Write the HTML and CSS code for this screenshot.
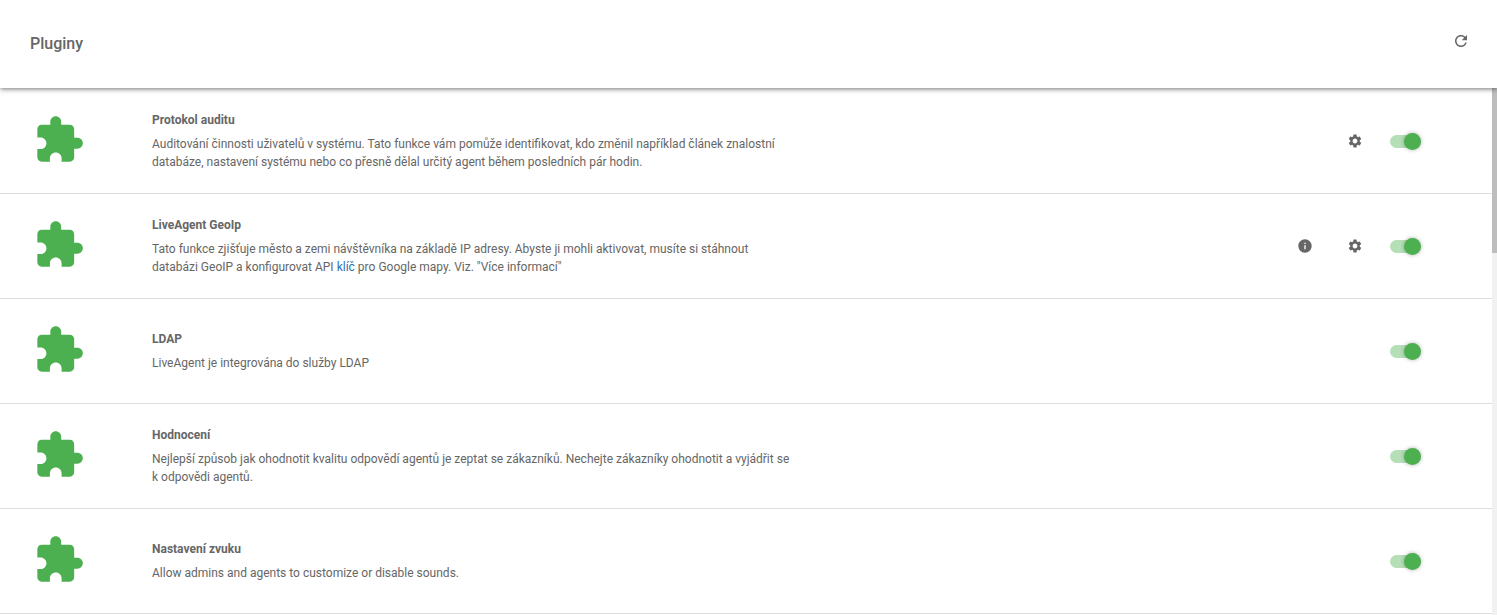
FILE: index.html
```html
<!DOCTYPE html>
<html lang="cs">
<head>
    <meta charset="UTF-8">
    <meta name="viewport" content="width=device-width, initial-scale=1.0">
    <title>Pluginy</title>
    <link rel="stylesheet" href="styles.css">
</head>
<body>
    <svg class="icon-defs" aria-hidden="true">
        <symbol id="i-plugin" viewBox="0 0 24 24"><path d="M20.5 11H19V7c0-1.1-.9-2-2-2h-4V3.5C13 2.12 11.88 1 10.5 1S8 2.12 8 3.5V5H4c-1.1 0-1.99.9-1.99 2v3.8H3.5c1.49 0 2.7 1.21 2.7 2.7s-1.21 2.7-2.7 2.7H2V20c0 1.1.9 2 2 2h3.8v-1.5c0-1.49 1.21-2.7 2.7-2.7 1.49 0 2.7 1.21 2.7 2.7V22H17c1.1 0 2-.9 2-2v-4h1.5c1.38 0 2.5-1.12 2.5-2.5S21.88 11 20.5 11z"/></symbol>
        <symbol id="i-gear" viewBox="0 0 24 24"><path d="M19.14 12.94c.04-.3.06-.61.06-.94 0-.32-.02-.64-.07-.94l2.03-1.58c.18-.14.23-.41.12-.61l-1.92-3.32c-.12-.22-.37-.29-.59-.22l-2.39.96c-.5-.38-1.03-.7-1.62-.94l-.36-2.54c-.04-.24-.24-.41-.48-.41h-3.84c-.24 0-.43.17-.47.41l-.36 2.54c-.59.24-1.13.57-1.62.94l-2.39-.96c-.22-.08-.47 0-.59.22L2.74 8.87c-.12.21-.08.47.12.61l2.03 1.58c-.05.3-.09.63-.09.94s.02.64.07.94l-2.03 1.58c-.18.14-.23.41-.12.61l1.92 3.32c.12.22.37.29.59.22l2.39-.96c.5.38 1.03.7 1.62.94l.36 2.54c.05.24.24.41.48.41h3.84c.24 0 .44-.17.47-.41l.36-2.54c.59-.24 1.13-.56 1.62-.94l2.39.96c.22.08.47 0 .59-.22l1.92-3.32c.12-.22.07-.47-.12-.61l-2.01-1.58zM12 15.6c-1.98 0-3.6-1.62-3.6-3.6s1.62-3.6 3.6-3.6 3.6 1.62 3.6 3.6-1.62 3.6-3.6 3.6z"/></symbol>
        <symbol id="i-info" viewBox="0 0 24 24"><path d="M12 2C6.48 2 2 6.48 2 12s4.48 10 10 10 10-4.48 10-10S17.52 2 12 2zm1 15h-2v-6h2v6zm0-8h-2V7h2v2z"/></symbol>
        <symbol id="i-refresh" viewBox="0 0 24 24"><path d="M17.65 6.35C16.2 4.9 14.21 4 12 4c-4.42 0-7.99 3.58-7.99 8s3.57 8 7.99 8c3.73 0 6.84-2.55 7.73-6h-2.08c-.82 2.33-3.04 4-5.65 4-3.31 0-6-2.69-6-6s2.69-6 6-6c1.66 0 3.14.69 4.22 1.78L13 11h7V4l-2.35 2.35z"/></symbol>
    </svg>

    <header class="top-bar">
        <h1>Pluginy</h1>
        <svg class="refresh-icon"><use href="#i-refresh"/></svg>
    </header>

    <div class="content">
        <main class="plugin-list">
            <section class="plugin-row">
                <svg class="plugin-icon"><use href="#i-plugin"/></svg>
                <div class="plugin-text">
                    <h3>Protokol auditu</h3>
                    <p>Auditování činnosti uživatelů v systému. Tato funkce vám pomůže identifikovat, kdo změnil například článek znalostní databáze, nastavení systému nebo co přesně dělal určitý agent během posledních pár hodin.</p>
                </div>
                <div class="plugin-actions">
                    <span class="action-slot"><svg class="action-icon"><use href="#i-gear"/></svg></span>
                    <span class="toggle"></span>
                </div>
            </section>

            <section class="plugin-row">
                <svg class="plugin-icon"><use href="#i-plugin"/></svg>
                <div class="plugin-text">
                    <h3>LiveAgent GeoIp</h3>
                    <p>Tato funkce zjišťuje město a zemi návštěvníka na základě IP adresy. Abyste ji mohli aktivovat, musíte si stáhnout databázi GeoIP a konfigurovat API <a href="#">klíč</a> pro Google mapy. Viz. "Více informací"</p>
                </div>
                <div class="plugin-actions">
                    <span class="action-slot"><svg class="action-icon"><use href="#i-info"/></svg></span>
                    <span class="action-slot"><svg class="action-icon"><use href="#i-gear"/></svg></span>
                    <span class="toggle"></span>
                </div>
            </section>

            <section class="plugin-row">
                <svg class="plugin-icon"><use href="#i-plugin"/></svg>
                <div class="plugin-text">
                    <h3>LDAP</h3>
                    <p>LiveAgent je integrována do služby LDAP</p>
                </div>
                <div class="plugin-actions">
                    <span class="toggle"></span>
                </div>
            </section>

            <section class="plugin-row">
                <svg class="plugin-icon"><use href="#i-plugin"/></svg>
                <div class="plugin-text">
                    <h3>Hodnocení</h3>
                    <p>Nejlepší způsob jak ohodnotit kvalitu odpovědí agentů je zeptat se zákazníků. Nechejte zákazníky ohodnotit a vyjádřit se k odpovědi agentů.</p>
                </div>
                <div class="plugin-actions">
                    <span class="toggle"></span>
                </div>
            </section>

            <section class="plugin-row">
                <svg class="plugin-icon"><use href="#i-plugin"/></svg>
                <div class="plugin-text">
                    <h3>Nastavení zvuku</h3>
                    <p>Allow admins and agents to customize or disable sounds.</p>
                </div>
                <div class="plugin-actions">
                    <span class="toggle"></span>
                </div>
            </section>
        </main>

        <div class="scrollbar"><div class="scrollbar-thumb"></div></div>
    </div>
</body>
</html>
```

FILE: styles.css
```css
html, body {
    height: 100%;
}

body {
    margin: 0;
    display: flex;
    flex-direction: column;
    overflow: hidden;
    background-color: #fff;
    color: #666;
    font-family: Roboto, "Liberation Sans", sans-serif;
    font-size: 12px;
    line-height: 18px;
}

.icon-defs {
    display: none;
}

.top-bar {
    flex: 0 0 88px;
    box-sizing: border-box;
    position: relative;
    z-index: 1;
    display: flex;
    justify-content: space-between;
    align-items: flex-start;
    padding: 0 27px 0 30px;
    background-color: #fff;
    box-shadow: 0 1px 5px rgba(0, 0, 0, 0.55);
}

.top-bar h1 {
    margin: 34px 0 0;
    font-size: 16px;
    font-weight: 500;
    line-height: 20px;
    color: #666;
}

.refresh-icon {
    width: 18px;
    height: 18px;
    margin-top: 32px;
    fill: #666;
}

.content {
    flex: 1;
    min-height: 0;
    display: flex;
}

.plugin-list {
    flex: 1;
    min-width: 0;
}

.scrollbar {
    flex: 0 0 5px;
    background-color: #f1f1f1;
}

.scrollbar-thumb {
    height: 165px;
    background-color: #bdbdbd;
}

.plugin-row {
    box-sizing: border-box;
    height: 105px;
    display: flex;
    align-items: center;
    padding: 0 71px 0 33px;
    border-bottom: 1px solid #ddd;
}

.plugin-row:first-child {
    height: 106px;
    padding-top: 1px;
}

.plugin-icon {
    flex: none;
    width: 52px;
    height: 52px;
    margin: 0 67px 2px 0;
    fill: #4caf50;
}

.plugin-text {
    width: 640px;
}

.plugin-text h3 {
    margin: 0 0 6px;
    font-size: 12px;
    font-weight: 700;
    line-height: 18px;
    color: #666;
}

.plugin-text p {
    margin: 0;
    line-height: 18.5px;
}

.plugin-text a {
    color: #2f72ad;
    text-decoration: none;
}

.plugin-actions {
    margin-left: auto;
    display: flex;
    align-items: center;
}

.action-slot {
    width: 50px;
    display: flex;
    justify-content: center;
}

.action-icon {
    width: 16px;
    height: 16px;
    fill: #666;
}

.toggle {
    position: relative;
    display: block;
    width: 31px;
    height: 13px;
    margin-left: 10px;
    border-radius: 7px;
    background-color: #b5dfb7;
}

.toggle::after {
    content: "";
    position: absolute;
    top: -2px;
    right: 0;
    width: 17px;
    height: 17px;
    border-radius: 50%;
    background-color: #4caf50;
    box-shadow: 0 0 4px rgba(0, 0, 0, 0.3);
}
```
